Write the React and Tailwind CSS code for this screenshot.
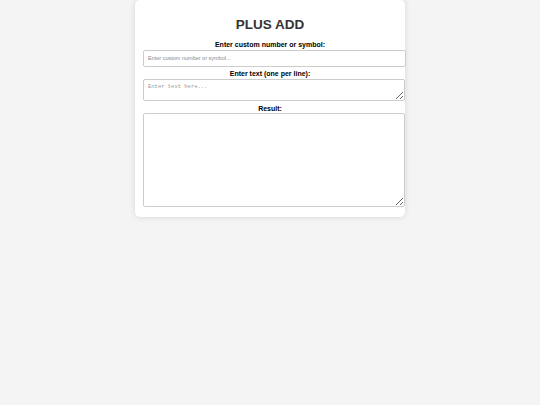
import React from "react";

export default function App() {
  return (
    <div className="min-h-screen w-full bg-[#f4f4f4]" style={{ fontFamily: '"Liberation Sans", Arial, sans-serif' }}>
      <div className="mx-auto w-[270px] bg-white rounded-[5px] shadow-[0_0_6px_rgba(0,0,0,0.12)] px-[8px] pt-[17px] pb-[9.5px]">
        <h1 className="text-center text-[13.5px] leading-[16px] font-bold text-[#333]">PLUS ADD</h1>
        <label className="block mt-[8px] mb-[1px] text-center text-[7px] leading-[8px] font-bold text-black">
          Enter custom number or symbol:
        </label>
        <input
          type="text"
          placeholder="Enter custom number or symbol..."
          className="block box-border w-[263px] h-[16.5px] border border-[#ccc] rounded-[2px] px-[4px] text-[5.5px] text-black placeholder:text-[#8a8a8a] outline-none"
          style={{ fontFamily: '"Liberation Sans", Arial, sans-serif' }}
        />
        <label className="block mt-[3px] mb-[1px] text-center text-[7px] leading-[8px] font-bold text-black">
          Enter text (one per line):
        </label>
        <textarea
          placeholder="Enter text here..."
          className="block box-border w-[262px] h-[22px] border border-[#ccc] rounded-[2px] px-[4px] py-[3px] text-[5.5px] leading-[7px] text-black placeholder:text-[#999] outline-none"
          style={{ fontFamily: '"Liberation Mono", "Courier New", monospace' }}
        />
        <label className="block mt-[4.3px] text-center text-[7px] leading-[8px] font-bold text-black">
          Result:
        </label>
        <textarea
          readOnly
          className="block box-border w-[262px] h-[94.5px] border border-[#ccc] rounded-[2px] px-[4px] py-[3px] text-[5.5px] outline-none"
          style={{ fontFamily: '"Liberation Mono", "Courier New", monospace' }}
        />
      </div>
    </div>
  );
}
